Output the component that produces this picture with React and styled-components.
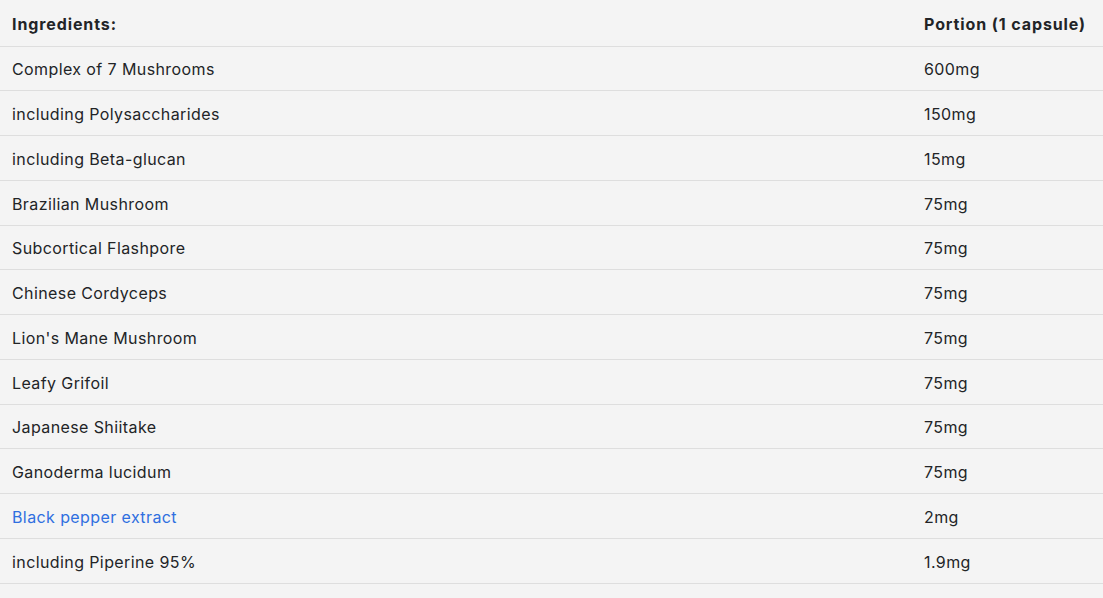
import React from "react";
import styled, { createGlobalStyle } from "styled-components";

const Global = createGlobalStyle`
  html, body { margin: 0; padding: 0; background: #f4f4f4; }
  body { font-family: Inter, "Noto Sans", sans-serif; color: #222427; }
`;

const Table = styled.table`
  width: 1103px;
  border-collapse: collapse;
  font-size: 16px;
`;

const HeadCell = styled.th`
  box-sizing: border-box;
  text-align: left;
  font-weight: 700;
  letter-spacing: 0.9px;
  height: 46px;
  padding: 2px 12px 0;
  border-bottom: 1px solid #dedede;
  vertical-align: middle;
  white-space: nowrap;
  width: ${(p) => (p.$narrow ? "191px" : "auto")};
`;

const Cell = styled.td`
  box-sizing: border-box;
  height: 44.75px;
  padding: 2px 12px 0;
  border-bottom: 1px solid #dedede;
  vertical-align: middle;
  font-weight: 400;
  letter-spacing: 0.4px;
`;

const Link = styled.a`
  color: #2f6fe0;
  text-decoration: none;
`;

const rows = [
  ["Complex of 7 Mushrooms", "600mg"],
  ["including Polysaccharides", "150mg"],
  ["including Beta-glucan", "15mg"],
  ["Brazilian Mushroom", "75mg"],
  ["Subcortical Flashpore", "75mg"],
  ["Chinese Cordyceps", "75mg"],
  ["Lion's Mane Mushroom", "75mg"],
  ["Leafy Grifoil", "75mg"],
  ["Japanese Shiitake", "75mg"],
  ["Ganoderma lucidum", "75mg"],
  ["Black pepper extract", "2mg", true],
  ["including Piperine 95%", "1.9mg"],
];

export default function App() {
  return (
    <>
      <Global />
      <Table>
        <thead>
          <tr>
            <HeadCell>Ingredients:</HeadCell>
            <HeadCell $narrow>Portion (1 capsule)</HeadCell>
          </tr>
        </thead>
        <tbody>
          {rows.map(([name, val, link]) => (
            <tr key={name}>
              <Cell>{link ? <Link href="#">{name}</Link> : name}</Cell>
              <Cell>{val}</Cell>
            </tr>
          ))}
        </tbody>
      </Table>
    </>
  );
}
